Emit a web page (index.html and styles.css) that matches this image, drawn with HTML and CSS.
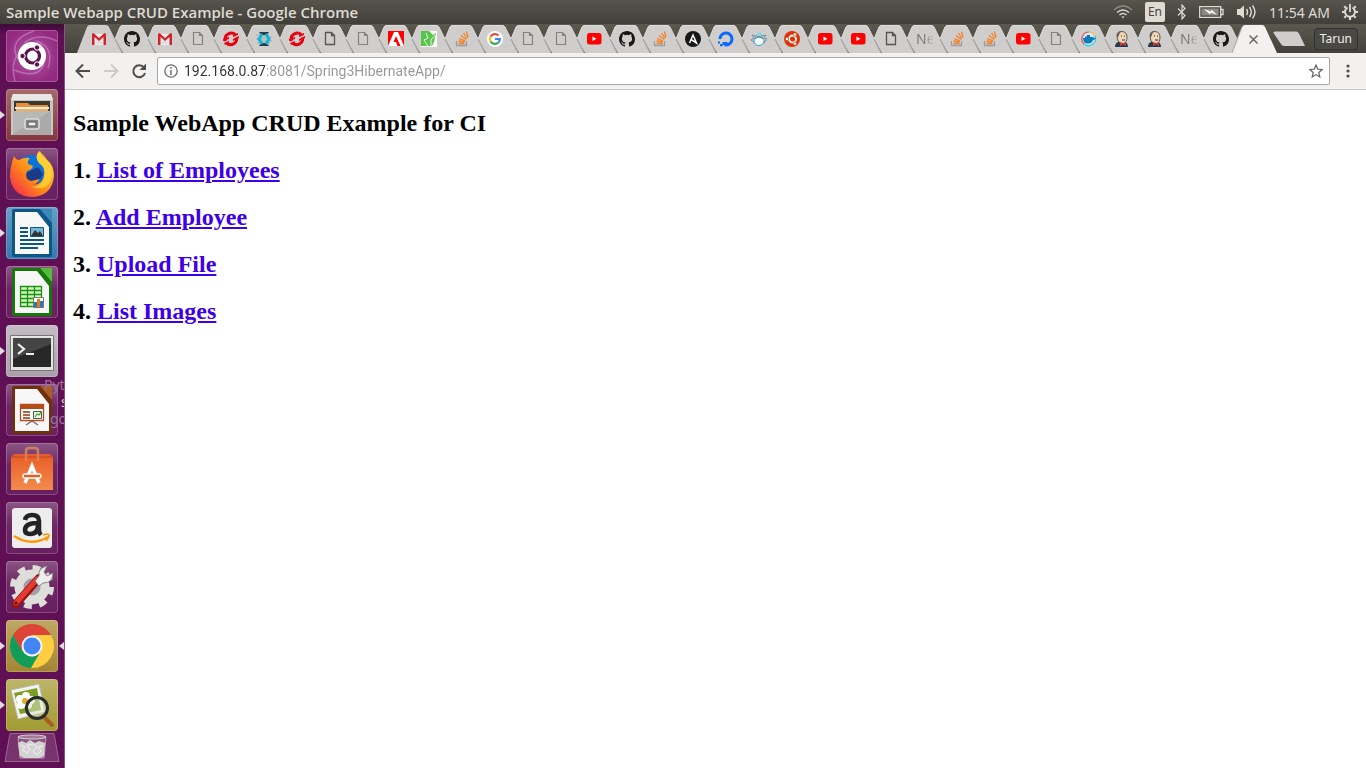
FILE: index.html
```
<!DOCTYPE html>
<html lang="en">
<head>
<meta charset="utf-8">
<title>Sample Webapp CRUD Example</title>
<link rel="stylesheet" href="styles.css">
</head>
<body>
<svg class="sprite" aria-hidden="true">
  <symbol id="shape" viewBox="0 0 46 29"><path fill="#d0cecd" d="M5 15 10 3Q11 1 13 1H29Q31 1 32 3L45 29H13Z"/><path d="M5 15 12 28.500" fill="none" stroke="#a9a7a5" stroke-width="1.300"/><path d="M5 15 10 3Q11 1.500 13 1.500H29Q31 1.500 32 3L38 15" fill="none" stroke="#dedcda"/></symbol>
  <symbol id="shape-first" viewBox="0 0 46 29"><path fill="#d0cecd" d="M0 29 10 3Q11 1 13 1H29Q31 1 32 3L45 29Z"/></symbol>
  <symbol id="shape-on" viewBox="0 0 46 29"><path fill="#f2f1f0" d="M0 29 10 3Q11 1 13 1H30Q32 1 33 3L45 29Z"/><path d="M0 29 10 3" stroke="#a9a7a5"/></symbol>
  <symbol id="gmail" viewBox="0 0 16 16"><path fill="#eee" d="M2 3h12v11H2z"/><path fill="#ddd" d="M3 13 8 8l5 5z"/><path fill="#d2232a" d="M1 3.500Q1 2 2.500 2L8 7l5.500-5Q15 2 15 3.500V14h-2.500V6L8 10 3.500 6v8H1z"/></symbol>
  <symbol id="github" viewBox="0 0 16 16"><path fill="#191717" d="M8 0C3.580 0 0 3.580 0 8c0 3.540 2.290 6.530 5.470 7.590.4.070.55-.17.55-.38v-1.490c-2.230.49-2.690-.94-2.690-.94-.36-.93-.89-1.170-.89-1.170-.73-.5.050-.49.050-.49.8.060 1.230.83 1.230.83.72 1.220 1.870.87 2.330.66.070-.52.280-.87.5-1.070-1.780-.2-3.640-.89-3.640-3.950 0-.87.310-1.590.82-2.150-.080-.2-.36-1.020.080-2.120 0 0 .67-.21 2.200.82a7.600 7.600 0 0 1 4 0c1.530-1.040 2.200-.82 2.200-.82.44 1.100.16 1.920.080 2.120.51.56.82 1.270.82 2.150 0 3.070-1.870 3.750-3.650 3.950.29.25.54.73.54 1.480v2.190c0 .21.150.46.550.38A8 8 0 0 0 16 8c0-4.420-3.580-8-8-8z"/></symbol>
  <symbol id="doc" viewBox="0 0 16 16"><path d="M3.500 1.500h6l3 3v9h-9zM9.500 1.500v3h3" fill="none" stroke="#858381" stroke-width="1.200"/></symbol>
  <symbol id="doc-dark" viewBox="0 0 16 16"><path d="M3.500 1.500h6l3 3v9h-9zM9.500 1.500v3h3" fill="none" stroke="#555" stroke-width="1.300"/></symbol>
  <symbol id="openshift" viewBox="0 0 16 16"><path d="M2.500 10A6 6 0 0 1 12.500 4M13.500 6.500A6 6 0 0 1 4 12.500" fill="none" stroke="#e8000d" stroke-width="3"/><path d="m0 8 6-2v2l-6 2zM10 8l6-3v2l-6 3zM10 4l5-2v2l-5 2zM1 12l5-2v2l-4 2z" fill="#f00012"/></symbol>
  <symbol id="katacoda" viewBox="0 0 16 16"><path d="M0 4h13M3 6h13M0 8h14M2 10h14M1 12h13" stroke="#92aeb6"/><path fill="#263f4b" d="M3 1h10l-2 3H5zM3 15h10l-2-3H5z"/><path d="M6 3 3 8l3 5M10 3l3 5-3 5" fill="none" stroke="#13b3d5" stroke-width="3"/></symbol>
  <symbol id="adobe" viewBox="0 0 16 16"><path fill="#f00" d="M0 0h16v15H0z"/><path fill="#fff" d="M0 15 6 1h4l6 14h-3.500L8 5l-2.500 6H8l1.500 4z"/></symbol>
  <symbol id="leaf" viewBox="0 0 16 16"><path fill="#fff" d="M0 0h16v16H0z"/><path fill="#59c44a" d="M0 0h8l4 4 3-2-2 9-2 4H0z"/><path d="m5 2 2 5-4 2 4 6M14 4l-4 5v6" fill="none" stroke="#e9f7e7"/></symbol>
  <symbol id="stack" viewBox="0 0 16 16"><path d="M2.500 10v4.500h10V10" fill="none" stroke="#9a9c9f" stroke-width="1.300"/><path d="M4.500 12.500h6M4.500 10l6 1M5 7.500l6 2.300M7 4.500l5 4M9.500 2l3.500 5.500M12.500.5l1.500 6" stroke="#f48024" stroke-width="1.300"/></symbol>
  <symbol id="google" viewBox="0 0 16 16"><circle cx="8" cy="8" r="8" fill="#fff"/><g fill="none" stroke-width="2.200"><path d="M3.600 5.500A5 5 0 0 1 11.500 4.500" stroke="#ea4335"/><path d="M3.600 5.500a5 5 0 0 0 0 5" stroke="#fbbc05"/><path d="M3.600 10.500a5 5 0 0 0 7.800 1" stroke="#34a853"/><path d="M11.400 11.500A5 5 0 0 0 13 8H8" stroke="#4285f4"/></g></symbol>
  <symbol id="youtube" viewBox="0 0 16 16"><rect x="1" y="2" width="14.500" height="11.500" rx="2.500" fill="#f00"/><path fill="#fff" d="m6.500 5.500 4 2.200-4 2.300z"/></symbol>
  <symbol id="ansible" viewBox="0 0 16 16"><circle cx="8" cy="8" r="8" fill="#171717"/><path d="M4.500 12 8 4l3.500 8L6 8.500" fill="none" stroke="#fff" stroke-width="1.500"/></symbol>
  <symbol id="ocean" viewBox="0 0 16 16"><path d="M2 8a6 6 0 1 1 6 6v-3" fill="none" stroke="#0869fb" stroke-width="3"/><path fill="#0869fb" d="M4.500 11h3v3h-3zM2 13h2.500v2.300H2zM0 10.500h2v2H0z"/></symbol>
  <symbol id="droplet" viewBox="0 0 16 16"><path d="M8 1 5 5 1 4l2 3-3 2 4 3h9l3-4-3-1 2-3-4 1z" fill="#bcc8ce" stroke="#76929d"/><ellipse cx="8" cy="10" rx="5" ry="4.500" fill="#f7feff" stroke="#379fca"/><path d="M8 0 5 4h6z" fill="#84d9f0"/><path d="M4 8q4-4 8 0" fill="none" stroke="#537785"/></symbol>
  <symbol id="ubuntu" viewBox="0 0 16 16"><circle cx="8" cy="8" r="8" fill="#dd3507"/><circle cx="8.500" cy="8" r="3.500" fill="none" stroke="#fff" stroke-width="1.800"/><g fill="#fff" stroke="#dd3507" stroke-width=".7"><circle cx="3" cy="8" r="1.700"/><circle cx="11" cy="3.400" r="1.700"/><circle cx="11" cy="12.600" r="1.700"/></g></symbol>
  <symbol id="docker" viewBox="0 0 16 16"><circle cx="8" cy="8" r="7" fill="#d9e6eb"/><path d="M8 1a7 7 0 0 0-5 12" fill="none" stroke="#ed455a" stroke-width="1.200"/><path d="M8 1a7 7 0 0 1 6 4" fill="none" stroke="#f6bf36" stroke-width="1.200"/><path d="M14 5A7 7 0 0 1 3 13" fill="none" stroke="#25cce6" stroke-width="1.200"/><path fill="#087bb8" d="M2 7h2V5.500h2V4h3v2h2v1l1-1.500 1 1.500h2q-1.500 2-3 2-1 3.500-5 3.500Q2 12.500 2 7z"/></symbol>
  <symbol id="jenkins" viewBox="0 0 16 16"><path fill="#253a4c" d="M1 16q0-4 3-5h7q3 1 3 5z"/><path fill="#f0d6b7" stroke="#403b36" stroke-width=".8" d="M3 5Q3 0 8 .5T13 6q0 6-4 6.500Q4 12 3.500 8z"/><path d="M3 3q1-3 5-2.500-3 1-3 4L3 7z" fill="#625d55"/><path d="M7 5h1m2 0h1M8 9h3" stroke="#333"/><path fill="#d33833" d="m6 11 3 1.500 3-1.500v4l-3-1.500L6 15z"/></symbol>
</svg>

<header class="panel">
  <span class="window-title">Sample Webapp CRUD Example - Google Chrome</span>
  <div class="tray">
    <svg width="20" height="16" viewBox="0 0 20 16" fill="none" stroke="#dfdbd2" stroke-width="1.500"><path d="M1 6Q10-2 19 6" stroke="#8f8c84"/><path d="M4 8.500q6-5 12 0M6.500 11q3.500-3 7 0"/><path d="m8.500 12.500 1.500 2 1.500-2z" fill="#dfdbd2" stroke="none"/></svg>
    <span class="lang">En</span>
    <svg width="10" height="16" viewBox="0 0 10 16"><path d="m1 4.500 7 7L5 15V1l3 3.500-7 7" fill="none" stroke="#dfdbd2" stroke-width="1.200"/></svg>
    <svg width="25" height="14" viewBox="0 0 25 14"><path d="M.7 1.700h21v10.600H.7zM22 4.500h2v5h-2" fill="none" stroke="#dfdbd2" stroke-width="1.300"/><path fill="#8b8982" d="M2.500 3.500h17v7h-17z"/><path fill="#fff" d="m5 4 7 2.500.5-2L18 10l-6-2.500L11 9.500z"/></svg>
    <svg width="21" height="16" viewBox="0 0 21 16"><path fill="#dfdbd2" d="M1 5h3l4-3.500v13L4 11H1z"/><path d="M10.500 5q2 3 0 6M13.500 3q3.500 5 0 10M16.500 1.500q5 6.500 0 13" fill="none" stroke="#dfdbd2" stroke-width="1.400"/></svg>
    <time>11:54 AM</time>
    <svg width="16" height="16" viewBox="0 0 16 16" fill="none" stroke="#dfdbd2"><path d="M5.500 3.500a5 5 0 1 0 5 0" stroke-width="2"/><path d="M8 0v8" stroke-width="1.800"/><path d="M3.800 3.800 2.300 2.300M2.500 8H0M3.800 12.200l-1.500 1.500M8 13v3M12.200 12.200l1.500 1.500M13.500 8H16M12.200 3.800l1.500-1.500" stroke-width="2.200"/></svg>
  </div>
</header>

<div class="desktop">
  <nav class="launcher" aria-label="Launcher">
    <p class="ghost"><span>Pyt</span><span class="ghost-mid">s</span><span class="ghost-end">go</span></p>
    <button class="tile dash" aria-label="Dash"><svg viewBox="0 0 52 52"><g fill="none" stroke="#dda9d4" stroke-opacity=".45" stroke-width="1.500"><path d="M12 29Q1 10 28 1M30 11q19 6 12 27M38 33Q34 50 8 40M9 51Q4 33 13 23M18 13Q32 2 51 11"/></g><circle cx="26" cy="26" r="14" fill="#fff"/><circle cx="26.500" cy="26" r="7" fill="none" stroke="#5a1450" stroke-width="3.200"/><g fill="#5a1450" stroke="#fff"><circle cx="16.500" cy="26" r="2.700"/><circle cx="31" cy="17.500" r="2.700"/><circle cx="31" cy="34.500" r="2.700"/></g></svg></button>
    <button class="tile files running" aria-label="Files"><svg viewBox="0 0 52 52"><path fill="#c7c7c5" d="M7 5h38l2 5v36H5V10z"/><path fill="#e7e7e5" d="M7 5h38l2 6H5z"/><path fill="#3c3832" d="M8 12h36v10H8z"/><path fill="#e88d3b" d="M10 14h12l2 2h18v6H10z"/><path fill="#f9efdf" d="M9 18h34v2H9z"/><path fill="#f4ad5e" d="M10 20h32v2H10z"/><path fill="#aaa" d="M7 22h38v24H7z"/><path fill="#c1c1c0" d="M7 22h38L7 45z" opacity=".6"/><rect x="19" y="30" width="14" height="10" rx="2" fill="#888" stroke="#ddd" stroke-width="1.500"/><path fill="#eee" stroke="#555" d="M22 33h8v4h-8z"/></svg></button>
    <button class="tile" aria-label="Firefox"><svg viewBox="0 0 52 52"><defs><linearGradient id="fx" x1="1" y1="0" x2="0" y2="1"><stop stop-color="#ffe34a"/><stop offset=".55" stop-color="#ff8a18"/><stop offset="1" stop-color="#f51a55"/></linearGradient></defs><circle cx="26" cy="24" r="17" fill="#0a72d8"/><path fill="#1b3b88" d="M10 30Q17 42 32 35l5-9-5-7z"/><path fill="url(#fx)" d="M8 8q2 4 5 4 5-3 11-2-3 3-2 6l5 2q-1 4-6 5-3 8 4 10l9-2q-4 8-12 4 13 5 16-7 2-9-5-13-5-7 1-12 2 6 7 9 7 5 7 16-2 20-22 21Q6 48 4 29 4 19 8 8z"/><path fill="#ffd633" d="M33 3q-5 6 0 12 8 5 5 15-4 11-15 8 20 8 23-11Q46 13 33 3z" opacity=".75"/></svg></button>
    <button class="tile writer running" aria-label="Writer"><svg viewBox="0 0 52 52"><path fill="#0c5787" d="M6 4q0-2 2-2h27l11 13v33q0 2-2 2H8q-2 0-2-2z"/><path fill="#f7f7f7" d="M9 5h22l12 15v27H9z"/><path fill="#3c89b9" d="M34 2h12v14z"/><path d="M14 21h8M14 25h8M14 29h8M14 33h24M14 37h24M14 41h18" stroke="#0c5787" stroke-width="2"/><path fill="#75b8dc" stroke="#0c5787" d="M24.500 20.500h13v9h-13z"/><path fill="#333" d="m25 29 4-6 3 3 2-2 3 5z"/></svg></button>
    <button class="tile" aria-label="Calc"><svg viewBox="0 0 52 52"><path fill="#18770b" d="M6 4q0-2 2-2h27l11 13v33q0 2-2 2H8q-2 0-2-2z"/><path fill="#f7f7f7" d="M9 5h22l12 15v27H9z"/><path fill="#56ba3d" d="M34 2h12v14z"/><path fill="#d6f7c8" stroke="#189408" stroke-width="1.300" d="M14.500 20.500h21v20h-21zM21.500 20v20M28.500 20v20M14 24.500h21M14 28.500h21M14 32.500h21M14 36.500h21"/><path fill="#fff" stroke="#777" d="M27.500 31.500h10v10h-10z"/><path fill="#267db6" d="M28 36h3v5h-3z"/><path fill="#e97818" d="M31 33h3v8h-3z"/><path fill="#267db6" d="M34 35h3v6h-3z"/></svg></button>
    <button class="tile terminal running" aria-label="Terminal"><svg viewBox="0 0 52 52"><path fill="#e5e5e5" stroke="#777" d="M4.500 10.500h43v35h-43z"/><path fill="#272827" d="M7 13h38v29H7z"/><path fill="#555" d="M7 13h38v6L7 34z" opacity=".65"/><path d="m12 19 6 5-6 5M20 29h8" fill="none" stroke="#eee" stroke-width="2.200"/></svg></button>
    <button class="tile" aria-label="Impress"><svg viewBox="0 0 52 52"><path fill="#703010" d="M6 4q0-2 2-2h27l11 13v33q0 2-2 2H8q-2 0-2-2z"/><path fill="#f7f7f7" d="M9 5h22l12 15v27H9z"/><path fill="#a95c24" d="M34 2h12v14z"/><path d="m20 41 6-4 6 4" fill="none" stroke="#777" stroke-width="1.500"/><path fill="#fff" stroke="#b64d18" stroke-width="1.300" d="M14.500 20.500h23v16h-23z"/><path fill="#b64d18" d="M15 21h22v4H15z"/><path d="M17 28h7M17 31h7M17 34h7" stroke="#8b3515" stroke-width="1.500"/><path fill="#eaffea" stroke="#555" d="M27.500 27.500h8v7h-8z"/><path d="m29 33 2-3 2 1 2-3" fill="none" stroke="#33a530" stroke-width="1.200"/></svg></button>
    <button class="tile" aria-label="Software"><svg viewBox="0 0 52 52"><defs><linearGradient id="bag" x1="0" y1="0" x2="0" y2="1"><stop stop-color="#e95c25"/><stop offset="1" stop-color="#f38b4c"/></linearGradient></defs><path fill="url(#bag)" d="M5 14 8 11h36l3 3v33H5z"/><path d="M5 14h42" stroke="#b94923"/><path d="M20 18V8q0-3 3-3h6q3 0 3 3v10" fill="none" stroke="#cf805f" stroke-width="2.500"/><path d="m19 40 7-17 7 17" fill="none" stroke="#fff" stroke-width="3.500"/><rect x="17" y="31" width="18" height="4" rx="2" fill="#e95c25" stroke="#fff" stroke-width="1.300"/></svg></button>
    <button class="tile" aria-label="Amazon"><svg viewBox="0 0 52 52"><rect x="6" y="6" width="40" height="40" rx="3" fill="#eee"/><path d="M19 18q1-5 7-5 7 0 7 6v9q0 3 2 5M32 21q-13 0-13 7 0 4 5 4 8 0 8-9" fill="none" stroke="#232323" stroke-width="4.500"/><path d="M8 34q17 11 34 1" fill="none" stroke="#ff9900" stroke-width="2.500"/><path d="M37 33q6-2 6 0 0 3-3 6" fill="none" stroke="#ff9900" stroke-width="1.700"/></svg></button>
    <button class="tile" aria-label="Settings"><svg viewBox="0 0 52 52"><circle cx="26" cy="26" r="18" fill="none" stroke="#deddda" stroke-width="8" stroke-dasharray="7.140 7"/><circle cx="26" cy="26" r="13" fill="#a79ca6" stroke="#dededb" stroke-width="9"/><path d="m10 43 23-26" stroke="#971212" stroke-width="8" stroke-linecap="round"/><path d="m10 42 21-24" stroke="#e43b32" stroke-width="5" stroke-linecap="round"/><path fill="#eee" stroke="#888" d="m29 20 4-5q-1-8 8-10l-3 6 3 4 6-3q0 10-10 10l-4 3z"/><circle cx="10" cy="42" r="1.500" fill="#631015"/></svg></button>
    <button class="tile chrome running focused" aria-label="Chrome"><svg viewBox="0 0 52 52"><path fill="#db4437" d="M7 15a22 22 0 0 1 38 0H26L16 31z"/><path fill="#0f9d58" d="M7 15a22 22 0 0 0 18 33l10-17-9 6-10-6z"/><path fill="#ffcd40" d="M45 15a22 22 0 0 1-20 33l10-17q3-9-9-16z"/><circle cx="26" cy="26" r="10.500" fill="#f3f3f3"/><circle cx="26" cy="26" r="8.500" fill="#4285f4"/></svg></button>
    <button class="tile viewer running" aria-label="Image Viewer"><svg viewBox="0 0 52 52"><path fill="#f4f4ef" stroke="#bbb" d="m5 11 28-6 6 28-27 7z"/><path fill="#7d9d28" d="m8 14 23-5 4 22-21 4z"/><g fill="#fff"><circle cx="14" cy="20" r="4"/><circle cx="20" cy="17" r="4"/><circle cx="25" cy="21" r="4"/><circle cx="22" cy="26" r="4"/><circle cx="15" cy="26" r="4"/></g><circle cx="19" cy="22" r="3" fill="#e1ad22"/><path d="m37 37 9 9" stroke="#a65f22" stroke-width="4" stroke-linecap="round"/><circle cx="31" cy="29" r="10.500" fill="#dde6c9" fill-opacity=".5" stroke="#292c2c" stroke-width="3"/></svg></button>
    <button class="trash" aria-label="Trash"><svg viewBox="0 0 56 29"><path fill="#78326d" stroke="#9a6492" d="M6 .5h44l5 28H1z"/><path fill="#d8d2d7" fill-opacity=".2" stroke="#b9a2b4" d="M14 4h28l-2 21H16z"/><ellipse cx="28" cy="4" rx="14" ry="2" fill="#9c7c96" stroke="#d8cdd6"/><path fill="#d5d2d4" d="m14 10 4-2 4 2 4-3 5 3 4-2 6 2-1 13-4 2H20l-4-2z"/><path d="m17 12 4 2-3 3 5 3 3-4-3-4 6-1 4 3-4 4 4 4 4-4-3-4 5-1" fill="none" stroke="#f2f0f1"/></svg></button>
  </nav>

  <div class="browser">
    <div class="tabstrip">
      <button class="tab" aria-label="Mail"><svg><use href="#shape-first"/><use href="#gmail" x="14" y="7" width="16" height="16"/></svg></button>
      <button class="tab" aria-label="GitHub"><svg><use href="#shape"/><use href="#github" x="14" y="7" width="16" height="16"/></svg></button>
      <button class="tab" aria-label="Mail"><svg><use href="#shape"/><use href="#gmail" x="14" y="7" width="16" height="16"/></svg></button>
      <button class="tab" aria-label="Page"><svg><use href="#shape"/><use href="#doc" x="14" y="7" width="16" height="16"/></svg></button>
      <button class="tab" aria-label="OpenShift"><svg><use href="#shape"/><use href="#openshift" x="14" y="7" width="16" height="16"/></svg></button>
      <button class="tab" aria-label="Katacoda"><svg><use href="#shape"/><use href="#katacoda" x="14" y="7" width="16" height="16"/></svg></button>
      <button class="tab" aria-label="OpenShift"><svg><use href="#shape"/><use href="#openshift" x="14" y="7" width="16" height="16"/></svg></button>
      <button class="tab" aria-label="Page"><svg><use href="#shape"/><use href="#doc-dark" x="14" y="7" width="16" height="16"/></svg></button>
      <button class="tab" aria-label="Page"><svg><use href="#shape"/><use href="#doc" x="14" y="7" width="16" height="16"/></svg></button>
      <button class="tab" aria-label="Adobe"><svg><use href="#shape"/><use href="#adobe" x="14" y="7" width="16" height="16"/></svg></button>
      <button class="tab" aria-label="Leaf"><svg><use href="#shape"/><use href="#leaf" x="14" y="7" width="16" height="16"/></svg></button>
      <button class="tab" aria-label="Stack Overflow"><svg><use href="#shape"/><use href="#stack" x="14" y="7" width="16" height="16"/></svg></button>
      <button class="tab" aria-label="Google"><svg><use href="#shape"/><use href="#google" x="14" y="7" width="16" height="16"/></svg></button>
      <button class="tab" aria-label="Page"><svg><use href="#shape"/><use href="#doc" x="14" y="7" width="16" height="16"/></svg></button>
      <button class="tab" aria-label="Page"><svg><use href="#shape"/><use href="#doc" x="14" y="7" width="16" height="16"/></svg></button>
      <button class="tab" aria-label="YouTube"><svg><use href="#shape"/><use href="#youtube" x="14" y="7" width="16" height="16"/></svg></button>
      <button class="tab" aria-label="GitHub"><svg><use href="#shape"/><use href="#github" x="14" y="7" width="16" height="16"/></svg></button>
      <button class="tab" aria-label="Stack Overflow"><svg><use href="#shape"/><use href="#stack" x="14" y="7" width="16" height="16"/></svg></button>
      <button class="tab" aria-label="Ansible"><svg><use href="#shape"/><use href="#ansible" x="14" y="7" width="16" height="16"/></svg></button>
      <button class="tab" aria-label="DigitalOcean"><svg><use href="#shape"/><use href="#ocean" x="14" y="7" width="16" height="16"/></svg></button>
      <button class="tab" aria-label="Droplet"><svg><use href="#shape"/><use href="#droplet" x="14" y="7" width="16" height="16"/></svg></button>
      <button class="tab" aria-label="Ubuntu"><svg><use href="#shape"/><use href="#ubuntu" x="14" y="7" width="16" height="16"/></svg></button>
      <button class="tab" aria-label="YouTube"><svg><use href="#shape"/><use href="#youtube" x="14" y="7" width="16" height="16"/></svg></button>
      <button class="tab" aria-label="YouTube"><svg><use href="#shape"/><use href="#youtube" x="14" y="7" width="16" height="16"/></svg></button>
      <button class="tab" aria-label="Page"><svg><use href="#shape"/><use href="#doc-dark" x="14" y="7" width="16" height="16"/></svg></button>
      <button class="tab"><svg><use href="#shape"/></svg><span class="tab-text">Ne</span></button>
      <button class="tab" aria-label="Stack Overflow"><svg><use href="#shape"/><use href="#stack" x="14" y="7" width="16" height="16"/></svg></button>
      <button class="tab" aria-label="Stack Overflow"><svg><use href="#shape"/><use href="#stack" x="14" y="7" width="16" height="16"/></svg></button>
      <button class="tab" aria-label="YouTube"><svg><use href="#shape"/><use href="#youtube" x="14" y="7" width="16" height="16"/></svg></button>
      <button class="tab" aria-label="Page"><svg><use href="#shape"/><use href="#doc" x="14" y="7" width="16" height="16"/></svg></button>
      <button class="tab" aria-label="Docker"><svg><use href="#shape"/><use href="#docker" x="14" y="7" width="16" height="16"/></svg></button>
      <button class="tab" aria-label="Jenkins"><svg><use href="#shape"/><use href="#jenkins" x="14" y="7" width="16" height="16"/></svg></button>
      <button class="tab" aria-label="Jenkins"><svg><use href="#shape"/><use href="#jenkins" x="14" y="7" width="16" height="16"/></svg></button>
      <button class="tab"><svg><use href="#shape"/></svg><span class="tab-text">Ne</span></button>
      <button class="tab" aria-label="GitHub"><svg><use href="#shape"/><use href="#github" x="14" y="7" width="16" height="16"/></svg></button>
      <button class="tab active" aria-label="Close tab"><svg><use href="#shape-on"/><path d="m17.500 11.500 8 8m0-8-8 8" stroke="#666" stroke-width="1.500"/></svg></button>
      <button class="new-tab" aria-label="New tab"><svg width="33" height="16" viewBox="0 0 33 16"><path fill="#d0cecd" d="M2 .5h21q2 0 3 2L32 15H11q-2 0-3-2L.5 2Q0 .5 2 .5z"/></svg></button>
      <button class="profile">Tarun</button>
    </div>

    <div class="toolbar">
      <button class="tool" aria-label="Back"><svg viewBox="0 0 16 16"><path d="M15 8H2M8 1.500 1.500 8 8 14.500" fill="none" stroke="#4d4d4d" stroke-width="2"/></svg></button>
      <button class="tool" aria-label="Forward"><svg viewBox="0 0 16 16"><path d="M1 8h13M8 1.500 14.500 8 8 14.500" fill="none" stroke="#cbcac9" stroke-width="2"/></svg></button>
      <button class="tool" aria-label="Reload"><svg viewBox="0 0 16 16"><path d="M13 4.500A6 6 0 1 0 14 10" fill="none" stroke="#4d4d4d" stroke-width="2"/><path fill="#4d4d4d" d="M15 .5V7H8.500z"/></svg></button>
      <div class="omnibox">
        <svg width="14" height="14" viewBox="0 0 14 14"><circle cx="7" cy="7" r="6.200" fill="none" stroke="#6b6b6b" stroke-width="1.300"/><path d="M7 6v5M7 3v1.700" stroke="#6b6b6b" stroke-width="1.500"/></svg>
        <input class="url" type="text" aria-label="Address" value="192.168.0.87:8081/Spring3HibernateApp/">
        <button class="star" aria-label="Bookmark"><svg width="14" height="14" viewBox="0 0 14 14"><path d="m7 1 1.700 4.100 4.600.4-3.500 3 1 4.500L7 10.600 3.200 13l1-4.500-3.500-3 4.600-.4z" fill="none" stroke="#666" stroke-width="1.200"/></svg></button>
      </div>
      <button class="menu" aria-label="Menu"><svg width="4" height="14" viewBox="0 0 4 14" fill="#4d4d4d"><circle cx="2" cy="2" r="1.600"/><circle cx="2" cy="7" r="1.600"/><circle cx="2" cy="12" r="1.600"/></svg></button>
    </div>

    <main class="page">
      <h2>Sample WebApp CRUD Example for CI</h2>
      <h2>1. <a href="#employees">List of Employees</a></h2>
      <h2>2. <a href="#add">Add Employee</a></h2>
      <h2>3. <a href="#upload">Upload File</a></h2>
      <h2>4. <a href="#images">List Images</a></h2>
    </main>
  </div>
</div>
</body>
</html>
```

FILE: styles.css
```
* { box-sizing: border-box; }
html, body { height: 100%; }
body {
  margin: 0;
  display: flex;
  flex-direction: column;
  overflow: hidden;
  background: #fff;
  font-family: "Noto Sans", "Open Sans", sans-serif;
}
button {
  margin: 0;
  padding: 0;
  border: 0;
  background: none;
  font: inherit;
}
svg { display: block; flex: none; }
.sprite { position: absolute; width: 0; height: 0; }

/* Top panel */
.panel {
  flex: none;
  display: flex;
  align-items: center;
  justify-content: space-between;
  height: 24px;
  padding: 0 8px 0 6px;
  background: linear-gradient(#56544b, #403f3a);
  color: #dfdbd2;
  font-size: 14px;
}
.window-title {
  font-family: "Open Sans", "Noto Sans", sans-serif;
  font-size: 15px;
  font-weight: 600;
}
.tray { display: flex; align-items: center; gap: 12px; }
.lang {
  width: 20px;
  height: 20px;
  border-radius: 2px;
  background: #dfdbd2;
  color: #45443f;
  font-size: 12px;
  line-height: 20px;
  text-align: center;
}

.desktop { flex: 1; display: flex; min-height: 0; }

/* Launcher */
.launcher {
  position: relative;
  flex: none;
  display: flex;
  flex-direction: column;
  align-items: center;
  gap: 7px;
  width: 65px;
  padding: 6px 1px 0 0;
  border-right: 1px solid #8a5583;
  background: linear-gradient(#3f0a38, #5f1054 12px, #5f1054);
  overflow: hidden;
}
.ghost {
  position: absolute;
  z-index: 1;
  top: 352px;
  left: 44px;
  display: flex;
  flex-direction: column;
  margin: 0;
  color: #9c7096;
  font-size: 14px;
  line-height: 17px;
}
.ghost-mid { padding-left: 17px; color: #d9c8d7; }
.ghost-end { padding-left: 6px; }
.tile {
  position: relative;
  flex: none;
  width: 52px;
  height: 52px;
  border-radius: 4px;
  background: linear-gradient(#8b5583, #6d2763 45%, #682060);
  box-shadow: inset 0 0 0 1px rgba(255, 255, 255, 0.2);
}
.tile svg { width: 52px; height: 52px; }
.dash { background: radial-gradient(#b65da8, #922a81 75%); }
.files { background: linear-gradient(#a36a6b, #86363f); }
.writer { background: linear-gradient(#6a9fc6, #3779ab); }
.terminal { background: linear-gradient(#c5bdc4, #aaa1a8); }
.chrome { background: linear-gradient(#c0a766, #a38532); }
.viewer { background: linear-gradient(#bcb668, #a29a31); }
.running::before,
.focused::after {
  content: "";
  position: absolute;
  top: 22px;
  left: -6px;
  border: 4px solid transparent;
  border-left: 5px solid #e2dce1;
  border-right: 0;
}
.focused::after {
  left: 53px;
  border-left: 0;
  border-right: 5px solid #e2dce1;
}
.trash { flex: none; width: 56px; margin-top: -5px; }

/* Browser */
.browser { flex: 1; min-width: 0; display: flex; flex-direction: column; }
.tabstrip {
  flex: none;
  display: flex;
  align-items: center;
  height: 29px;
  padding: 0 8px 0 12px;
  background: linear-gradient(#5b594e, #42413c);
}
.tab { position: relative; flex: none; width: 33px; height: 29px; }
.tab svg { width: 46px; height: 29px; }
.tab-text {
  position: absolute;
  top: 5px;
  left: 14px;
  width: 17px;
  overflow: hidden;
  color: transparent;
  background: linear-gradient(90deg, #777 50%, #c5c3c2);
  background-clip: text;
  font-size: 14px;
  line-height: 19px;
  text-align: left;
}
.new-tab { flex: none; margin: 0 auto 0 8px; }
.profile {
  height: 22px;
  padding: 0 5px;
  border: 1px solid #32312e;
  border-radius: 4px;
  background: #494842;
  color: #eee;
  font-size: 12px;
}
.toolbar {
  flex: none;
  display: flex;
  align-items: center;
  gap: 12px;
  height: 37px;
  padding: 0 16px 0 10px;
  border-bottom: 1px solid #c9c8c6;
  background: #f2f1f0;
}
.tool svg { width: 16px; height: 16px; }
.omnibox {
  flex: 1;
  display: flex;
  align-items: center;
  gap: 6px;
  height: 28px;
  margin: 0 4px 0 -2px;
  padding: 0 6px;
  border: 1px solid #a9a8a6;
  border-radius: 2px;
  background: #fff;
}
.url {
  flex: 1;
  min-width: 0;
  padding: 0;
  border: 0;
  outline: 0;
  color: transparent;
  background: linear-gradient(90deg, #333 82px, #969696 82px);
  background-clip: text;
  font-family: Roboto, "Noto Sans", sans-serif;
  font-size: 14px;
}

/* Page */
.page {
  flex: 1;
  padding: 0 8px;
  background: #fff;
  color: #000;
  font-family: "Liberation Serif", serif;
}
.page h2 { margin: 20px 0; font-size: 24px; line-height: 27px; }
.page a { color: #3d00e8; }
```
